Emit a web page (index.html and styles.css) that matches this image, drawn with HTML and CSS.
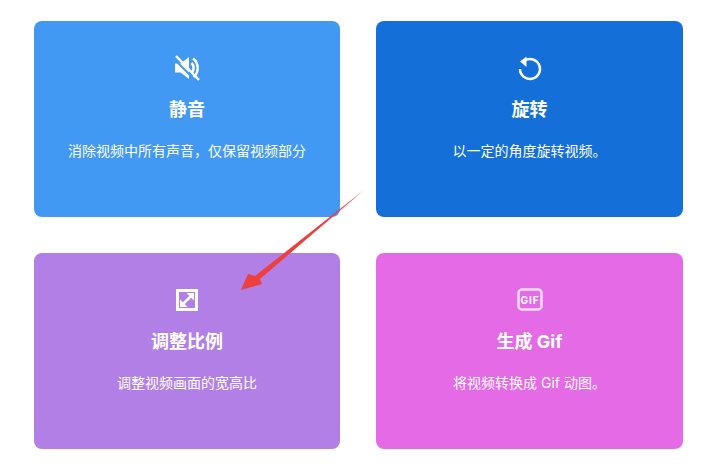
FILE: index.html
```html
<!DOCTYPE html>
<html lang="zh">
<head>
  <meta charset="UTF-8">
  <title>视频工具</title>
  <link rel="stylesheet" href="styles.css">
</head>
<body>
  <div class="tools">
    <div class="tool-card mute">
      <svg class="icon" viewBox="0 0 28 28">
        <path class="solid" d="M2 9.500h5.500L16 3v22l-8.500-6.500H2z"/>
        <path class="line" d="M18.500 9a7 7 0 0 1 0 10M20 4.500a12 12 0 0 1 0 19"/>
        <path class="cut" d="M1 5l22 22"/>
        <path class="slash" d="M3 2l23 24"/>
      </svg>
      <h3>静音</h3>
      <p>消除视频中所有声音，仅保留视频部分</p>
    </div>
    <div class="tool-card rotate">
      <svg class="icon" viewBox="0 0 28 28">
        <path class="ring" d="M9 6.300A10 10 0 1 1 4 15"/>
        <path class="solid" d="M10.500 2.500v10.500L4 7.500z"/>
      </svg>
      <h3>旋转</h3>
      <p>以一定的角度旋转视频。</p>
    </div>
    <div class="tool-card resize">
      <svg class="icon" viewBox="0 0 28 28">
        <path class="frame" d="M4.500 4.500h19v19h-19z"/>
        <path class="ring" d="M10 18l8-8"/>
        <path class="solid" d="M13.500 7H21v7.500zM14.500 21H7v-7.500z"/>
      </svg>
      <h3>调整比例</h3>
      <p>调整视频画面的宽高比</p>
    </div>
    <div class="tool-card gif">
      <svg class="icon" viewBox="0 0 28 28">
        <rect class="frame" x="2.500" y="3.500" width="23" height="20" rx="3.500"/>
        <text class="gif-label" x="14" y="17.500">GIF</text>
      </svg>
      <h3>生成 Gif</h3>
      <p>将视频转换成 Gif 动图。</p>
    </div>
    <svg class="arrow" viewBox="0 0 140 110">
      <path d="M1 102L8 86 15 88 124 2 20 91 22 96z"/>
    </svg>
  </div>
</body>
</html>
```

FILE: styles.css
```css
body {
  margin: 0;
  background: #fff;
  font-family: Inter, "Noto Sans CJK SC", sans-serif;
  color: #fff;
}

.tools {
  position: relative;
  display: grid;
  grid-template-columns: 306px 307px;
  grid-auto-rows: 196px;
  gap: 36px;
  padding: 21px 32px 19px 34px;
}

.tool-card {
  display: flex;
  flex-direction: column;
  align-items: center;
  padding-top: 33px;
  border-radius: 8px;
  text-align: center;
}

.mute {
  background-color: #4299f3;
}

.rotate {
  background-color: #1470d8;
}

.resize {
  background-color: #b17fe6;
}

.gif {
  background-color: #e56be6;
}

.icon {
  width: 28px;
  height: 28px;
}

.solid {
  fill: #fff;
}

.line,
.ring,
.frame,
.slash,
.cut {
  fill: none;
  stroke: #fff;
  stroke-width: 2.500;
}

.frame {
  stroke-width: 3;
}

.gif .frame {
  stroke-width: 2.500;
  stroke: #fbdffb;
}

.gif-label {
  fill: #fff;
  font-size: 10px;
  font-weight: 700;
  text-anchor: middle;
  letter-spacing: 1px;
}

.mute .cut {
  stroke: #4299f3;
  stroke-width: 2;
}

.tool-card h3 {
  margin: 15px 0 0;
  font-size: 18px;
  line-height: 26px;
  font-weight: 700;
}

.tool-card p {
  margin: 18px 0 0;
  font-size: 14px;
  line-height: 20px;
}

.arrow {
  position: absolute;
  left: 240px;
  top: 188px;
  width: 140px;
  height: 110px;
}

.arrow path {
  fill: #ee3f3f;
}
```
